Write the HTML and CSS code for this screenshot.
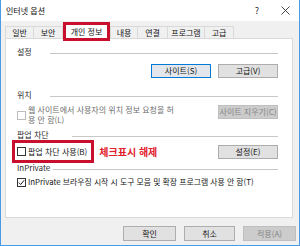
FILE: index.html
```html
<!DOCTYPE html>
<html lang="ko">
<head>
<meta charset="utf-8">
<link rel="stylesheet" href="styles.css">
</head>
<body>
<div class="window">
  <div class="titlebar">
    <span class="title">인터넷 옵션</span>
    <span class="help">?</span>
    <svg class="close" width="9" height="9" viewBox="0 0 9 9"><path d="M0.5 0.5L8.5 8.5M8.5 0.5L0.5 8.5" stroke="#333" stroke-width="0.9" fill="none"/></svg>
  </div>
  <div class="tabs">
    <div class="tab">일반</div>
    <div class="tab">보안</div>
    <div class="tab active">개인 정보</div>
    <div class="tab">내용</div>
    <div class="tab">연결</div>
    <div class="tab">프로그램</div>
    <div class="tab">고급</div>
  </div>
  <div class="panel">
    <div class="heading"><span class="label w33">설정</span><span class="rule"></span></div>
    <div class="btnrow">
      <button class="btn btn-focus">사이트(S)</button>
      <button class="btn">고급(V)</button>
    </div>
    <div class="heading mt11"><span class="label w33">위치</span><span class="rule"></span></div>
    <div class="locrow">
      <div class="check disabled">
        <span class="box"></span>
        <span class="txt">웹 사이트에서 사용자의 위치 정보 요청을 허<br>용 안 함(L)</span>
      </div>
      <button class="btn btn-disabled">사이트 지우기(C)</button>
    </div>
    <div class="heading mt4"><span class="label w55">팝업 차단</span><span class="rule"></span></div>
    <div class="poprow">
      <div class="annot">
        <span class="box"></span>
        <span class="txt">팝업 차단 사용(B)</span>
      </div>
      <span class="note">체크표시 해제</span>
      <button class="btn push">설정(E)</button>
    </div>
    <div class="heading"><span class="label w36">InPrivate</span><span class="rule"></span></div>
    <div class="privrow">
      <span class="box checked"><svg width="7" height="7" viewBox="0 0 7 7"><path d="M0.8 3.6L2.7 5.5L6.2 1.2" stroke="#222" stroke-width="1" fill="none"/></svg></span>
      <span class="txt tight">InPrivate 브라우징 시작 시 도구 모음 및 확장 프로그램 사용 안 함(T)</span>
    </div>
  </div>
  <div class="footer">
    <button class="btn fbtn">확인</button>
    <button class="btn fbtn fmid">취소</button>
    <button class="btn fbtn btn-disabled">적용(A)</button>
  </div>
</div>
</body>
</html>
```
FILE: styles.css
```css
* { box-sizing: border-box; margin: 0; padding: 0; }
html, body { width: 300px; height: 246px; overflow: hidden; }
body {
  font-family: "Noto Sans CJK KR", "Noto Sans", sans-serif;
  font-size: 8px;
  color: #151515;
  background: #fff;
}
.window {
  width: 300px;
  height: 246px;
  border: 1px solid #4a9be6;
  border-top: none;
  display: flex;
  flex-direction: column;
  background: #f0f0f0;
}
.titlebar {
  flex: none;
  height: 21px;
  background: #fff;
  display: flex;
  align-items: center;
  padding: 0 9px 0 5px;
}
.title { flex: 1; font-size: 8px; line-height: 10px; color: #111; }
.help { font-size: 9px; line-height: 10px; color: #333; margin-right: 22px; }
.close { display: block; }

.tabs {
  flex: none;
  height: 17px;
  display: flex;
  align-items: flex-end;
  padding-left: 4px;
}
.tab {
  height: 12px;
  border: 1px solid #d9d9d9;
  border-bottom: none;
  background: #f0f0f0;
  margin-left: -1px;
  display: flex;
  align-items: center;
  justify-content: center;
  line-height: 10px;
  font-size: 8px;
}
.tab:first-child { margin-left: 0; width: 29px; }
.tab:nth-child(2) { width: 30px; }
.tab.active {
  width: 47px;
  height: 19px;
  margin-left: 0;
  margin-bottom: -3px;
  border: 3px solid #c8102e;
  background: #fff;
  position: relative;
  z-index: 1;
}
.tab.active + .tab { margin-left: 0; width: 28px; }
.tab:nth-child(5) { width: 31px; }
.tab:nth-child(6) { width: 38px; }
.tab:nth-child(7) { width: 30px; }

.panel {
  flex: none;
  margin: 0 6px 0 4px;
  height: 180px;
  background: #fff;
  border: 1px solid #d9d9d9;
  padding: 7px 14px 0 11px;
}
.heading {
  display: flex;
  align-items: center;
  height: 12px;
  line-height: 12px;
  color: #2a2a2a;
}
.label { flex: none; }
.w33 { width: 33px; }
.w36 { width: 36px; }
.w55 { width: 55px; }
.rule { flex: 1; height: 1px; background: #c8c8c8; margin-top: 2px; }
.mt11 { margin-top: 11px; }
.mt4 { margin-top: 4px; }

.btn {
  font: inherit;
  font-size: 8px;
  line-height: 10px;
  width: 60px;
  height: 14px;
  background: #e1e1e1;
  border: 1px solid #adadad;
  color: #151515;
  display: flex;
  align-items: center;
  justify-content: center;
  flex: none;
}
.btn-focus { border-color: #0078d7; background: #e3e7ec; }
.btn-disabled { background: #cccccc; border-color: #bfbfbf; color: #848484; }

.btnrow {
  display: flex;
  justify-content: flex-end;
  gap: 7px;
  margin-top: 6px;
}

.box {
  flex: none;
  width: 9px;
  height: 9px;
  border: 1px solid #333;
  background: #fff;
  margin-right: 2px;
  display: flex;
  align-items: center;
  justify-content: center;
}
.txt { line-height: 10px; }
.tight { font-size: 7.85px; }

.locrow {
  display: flex;
  justify-content: space-between;
  align-items: flex-start;
  margin-top: 4px;
  height: 20px;
}
.check { display: flex; align-items: center; height: 20px; }
.check.disabled { color: #6e6e6e; }
.check.disabled .box { border-color: #bcbcbc; }

.poprow {
  display: flex;
  align-items: center;
  height: 21px;
}
.annot {
  flex: none;
  display: flex;
  align-items: center;
  height: 23px;
  margin-left: -5px;
  padding: 0 4px 0 2px;
  border: 3px solid #c8102e;
}
.note {
  margin-left: 5px;
  color: #e0202a;
  font-weight: bold;
  font-size: 10px;
  line-height: 12px;
}
.push { margin-left: auto; }

.privrow {
  display: flex;
  align-items: center;
  height: 12px;
  margin-top: 2px;
}

.footer {
  flex: none;
  display: flex;
  justify-content: flex-end;
  gap: 8px;
  margin-top: 8px;
  padding-right: 3px;
}
.fbtn { width: 53px; height: 15px; }
.fmid { width: 51px; }
```
